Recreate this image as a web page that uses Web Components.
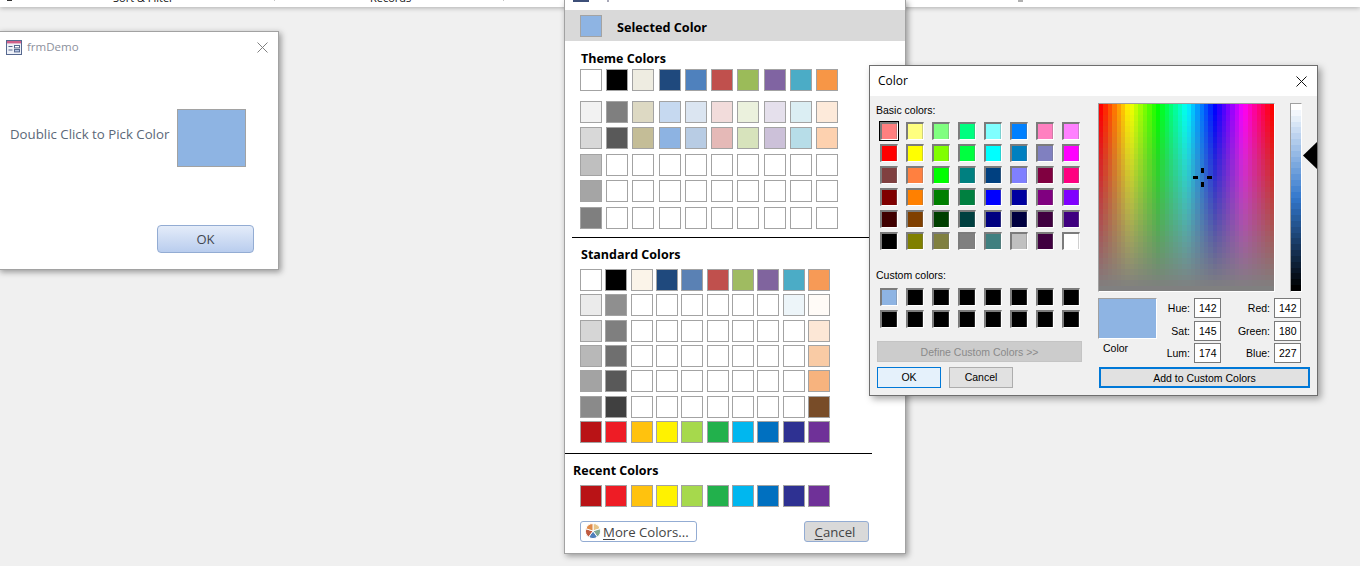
<!DOCTYPE html>
<html lang="en"><head><meta charset="utf-8"><title>Color picker</title>
<style>
html,body{margin:0;padding:0;background:#f0f0f0;overflow:hidden}
body{width:1360px;height:566px;position:relative;font-family:"Open Sans",sans-serif}
form-window{left:-2px;top:31px}
palette-panel{left:564px;top:0}
color-dialog{left:869px;top:65px}
</style></head><body>
<ribbon-strip></ribbon-strip>
<form-window></form-window>
<palette-panel></palette-panel>
<color-dialog></color-dialog>
<script>
const def=(name,css,html,init)=>customElements.define(name,class extends HTMLElement{
  connectedCallback(){ if(this.shadowRoot) return;
    const r=this.attachShadow({mode:'open'});
    r.innerHTML='<style>'+css+'</style>'+(typeof html==='function'?html(this):html);
    if(init) init(r,this);
  }
});
const W='#ffffff';
const whites=n=>Array(n).fill(W);

/* flat office-style swatch grid */
def('swatch-grid',`
:host{display:grid;grid-template-columns:repeat(10,22px);column-gap:var(--cg,4.22px);row-gap:var(--rg,4.4px);width:max-content}
i{display:block;width:22px;height:22px;box-sizing:border-box;border:1px solid #a3a3a3}
`,h=>h.getAttribute('colors').split(',').map(c=>`<i style="background:${c}"></i>`).join(''));

/* sunken win32 swatch grid */
def('well-grid',`
:host{display:grid;grid-template-columns:repeat(8,18px);column-gap:8px;row-gap:4px;width:max-content}
i{display:block;width:18px;height:18px;box-sizing:border-box;border-style:solid;border-width:2px 1px 1px 2px;border-color:#7c7c7c #fff #fff #7c7c7c;box-shadow:inset -1px 0 0 rgba(120,120,120,.35)}
i.sel{outline:1px solid #000;outline-offset:0}
`,h=>h.getAttribute('colors').split(',').map((c,i)=>`<i class="${i==0&&h.hasAttribute('selected')?'sel':''}" style="background:${c}"></i>`).join(''));

def('ribbon-strip',`
:host{display:block;height:7px;background:#fff;box-shadow:0 1px 5px rgba(0,0,0,.28);overflow:hidden;position:relative;font:11px/14px "Open Sans",sans-serif;color:#111}
.row{display:flex;align-items:flex-start}
b{display:block;height:1px}
span{display:block;margin-top:-9px;white-space:nowrap}
`,`<div class="row">
<b style="margin-left:7px;width:5px;background:#333"></b>
<span style="margin-left:101px;width:61px">Sort &amp; Filter</span>
<b style="margin-left:100px;width:1px;background:#c6c6c6"></b>
<span style="margin-left:95px;width:40px">Records</span>
<b style="margin-left:93px;width:1px;background:#c6c6c6"></b>
<b style="margin-left:514px;width:5px;height:2px;background:#b0b0b0"></b>
</div>`);

def('form-window',`
:host{display:block;position:absolute;width:281px;height:239px;box-sizing:border-box;background:#fff;border:1px solid #a2a2a2;box-shadow:2px 2px 6px rgba(0,0,0,.38)}
.title{display:flex;align-items:center;height:30px;padding:0 10px 0 7px;font:11.5px/16px "Open Sans",sans-serif;color:#8c909c}
.title span{margin-left:5px;flex:1}
.body{display:grid;grid-template-columns:167px 69px;padding:47px 0 0 11px;align-items:start}
.label{font:13.25px/18px "Open Sans",sans-serif;color:#5b6878;margin-top:16px;white-space:nowrap}
.sw{height:58px;box-sizing:border-box;background:#8eb4e3;border:1px solid #a2a2a2}
.foot{display:flex;justify-content:flex-end;padding:58px 24px 0 0}
.ok{width:97px;height:28px;box-sizing:border-box;border:1px solid #93acd3;border-radius:4px;background:linear-gradient(#e4ecf9,#b9cdee);font:13px/26px "Open Sans",sans-serif;color:#3f4650;text-align:center}
svg{display:block}
`,`<div class="title">
<svg width="16" height="15" viewBox="0 0 16 15"><rect x=".5" y=".5" width="15" height="14" fill="#eef1f8" stroke="#56688f"/><rect x="1" y="1" width="14" height="2.4" fill="#cf5f8a"/><path d="M2.5 6.5h4M2.5 10h4" stroke="#56688f"/><rect x="8.5" y="5.5" width="5" height="2.4" fill="#fff" stroke="#56688f"/><rect x="8.5" y="9.500" width="5" height="2.4" fill="#b4c4e2" stroke="#56688f"/></svg>
<span>frmDemo</span>
<svg width="11" height="11" viewBox="0 0 11 11"><path d="M.5.5l10 10M10.5.5l-10 10" stroke="#808080" fill="none"/></svg>
</div>
<div class="body"><div class="label">Doublic Click to Pick Color</div><div class="sw"></div></div>
<div class="foot"><div class="ok">OK</div></div>`);

const theme1=[W,'#000000','#eeece1','#1f497d','#4f81bd','#c0504d','#9bbb59','#8064a2','#4bacc6','#f79646'];
const theme2=['#f2f2f2','#7f7f7f','#ddd9c3','#c6d9f0','#dbe5f1','#f2dcdb','#ebf1dd','#e5e0ec','#dbeef3','#fdeada',
'#d8d8d8','#595959','#c4bd97','#8db3e2','#b8cce4','#e5b9b7','#d7e3bc','#ccc1d9','#b7dde8','#fdd1af',
'#bfbfbf',...whites(9),'#a5a5a5',...whites(9),'#7f7f7f',...whites(9)];
const brights=['#b91316','#ee1c25','#ffc20e','#fff200','#a6d94c','#22b14c','#00b7ef','#0070c0','#2e3192','#6f3198'];
const std=[W,'#000000','#fbf4e9','#1f497d','#5a81b4','#c0504d','#9fbb61','#80649e','#4bacc6','#f79a56',
'#ebebeb','#8f8f8f',...whites(6),'#edf5f9','#fffbf7',
'#d6d6d6','#7f7f7f',...whites(7),'#fce7d6',
'#b8b8b8','#6f6f6f',...whites(7),'#f9cba5',
'#a3a3a3','#595959',...whites(7),'#f7b37e',
'#8a8a8a','#404040',...whites(7),'#784c28',...brights];

def('palette-panel',`
:host{display:block;position:absolute;width:342px;height:554px;box-sizing:border-box;background:#fff;border:1px solid #a2a2a2;border-top:0;box-shadow:2px 2px 6px rgba(0,0,0,.38);font:700 12.5px/18px "Open Sans",sans-serif;color:#000}
.hint{height:10px;display:flex;align-items:flex-start}
.hint b{display:block;margin-left:8px;width:16px;height:2px;background:#3d4f78}
.hint s{display:block;margin-left:18px;width:2px;height:2px;background:#a8a8b8}
.sel{height:31px;background:#d9d9d9;display:flex;align-items:center}
.sel i{display:block;width:22px;height:22px;box-sizing:border-box;margin:1px 15px 0 15px;background:#8eb4e3;border:1px solid #a3a3a3}
.sel span{font-size:12.7px;margin-top:2px}
.lab{padding-left:16px}
.pad{padding-left:15px}
hr{border:0;background:#000;height:1px;margin:0}
.foot{display:flex;justify-content:space-between;padding:14px 36px 0 15px}
.btn{height:21px;box-sizing:border-box;border:1px solid #93acd3;border-radius:3px;font:400 13.2px/19px "Open Sans",sans-serif;color:#444;display:flex;align-items:center}
.btn span{margin-top:3px}
.more{width:117px;padding-left:4px;background:#fff}
.more svg{display:block;margin-right:2px}
.cancel{width:65px;justify-content:center;background:#d9d9d9;padding-right:3px}
u{text-underline-offset:2px}
`,`<div class="hint"><b></b><s></s></div>
<div class="sel"><i></i><span>Selected Color</span></div>
<div class="lab" style="margin:9px 0 1px">Theme Colors</div>
<div class="pad"><swatch-grid colors="${theme1}"></swatch-grid></div>
<div class="pad" style="margin-top:10px"><swatch-grid colors="${theme2}"></swatch-grid></div>
<hr style="margin:8.4px 0 0 7px;width:300px">
<div class="lab" style="margin:8px 0 5px">Standard Colors</div>
<div class="pad" style="--cg:3.33px;--rg:3.33px"><swatch-grid colors="${std}"></swatch-grid></div>
<hr style="margin-top:10px;width:307px">
<div class="lab" style="margin:8px 0 5px;padding-left:8px">Recent Colors</div>
<div class="pad" style="--cg:3.33px"><swatch-grid colors="${brights}"></swatch-grid></div>
<div class="foot">
<div class="btn more"><svg width="16" height="16" viewBox="0 0 30 30" stroke="#fff" stroke-width="1.8">
<path d="M15 15L15 1A14 14 0 0 1 28.300 10.700Z" fill="#e7c488"/><path d="M15 15L28.300 10.700A14 14 0 0 1 23.200 26.300Z" fill="#7fa890"/><path d="M15 15L23.200 26.300A14 14 0 0 1 6.800 26.300Z" fill="#4f7fbb"/><path d="M15 15L6.800 26.300A14 14 0 0 1 1.700 10.700Z" fill="#bf5a3f"/><path d="M15 15L1.700 10.700A14 14 0 0 1 15 1Z" fill="#e08a48"/></svg><span><u>M</u>ore Colors...</span></div>
<div class="btn cancel"><span><u>C</u>ancel</span></div>
</div>`);

const basic='#ff8080,#ffff80,#80ff80,#00ff80,#80ffff,#0080ff,#ff80c0,#ff80ff,#ff0000,#ffff00,#80ff00,#00ff40,#00ffff,#0080c0,#8080c0,#ff00ff,#804040,#ff8040,#00ff00,#008080,#004080,#8080ff,#800040,#ff0080,#800000,#ff8000,#008000,#008040,#0000ff,#0000a0,#800080,#8000ff,#400000,#804000,#004000,#004040,#000080,#000040,#400040,#400080,#000000,#808000,#808040,#808080,#408080,#c0c0c0,#400040,#ffffff';
const custom=['#8eb4e3',...Array(15).fill('#000000')];
const fields=[['Hue:','142','Red:','142'],['Sat:','145','Green:','180'],['Lum:','174','Blue:','227']];

def('color-dialog',`
:host{display:block;position:absolute;width:449px;height:331px;box-sizing:border-box;background:#f0f0f0;border:1px solid #6e6e6e;box-shadow:3px 3px 7px rgba(0,0,0,.35);font:10.5px/14px "Liberation Sans",sans-serif;color:#000}
.title{height:30px;background:#fff;display:flex;align-items:center;justify-content:space-between;padding:0 10px 0 8px;font:12px/16px "Open Sans",sans-serif}
svg{display:block}
.cols{display:flex;padding-left:6px}
.left{width:222px}
.btn{height:21px;box-sizing:border-box;text-align:center;line-height:19px;border:1px solid #adadad;background:#e1e1e1}
.spec{display:flex;align-items:flex-start;margin-top:7px}
.map{position:relative;width:177px;height:189px;box-sizing:border-box;border:1px solid;border-color:#a0a0a0 #fff #fff #a0a0a0}
canvas{display:block}
.map b{position:absolute;background:#000}
.lum{width:12px;height:189px;box-sizing:border-box;border:1px solid;border-color:#a0a0a0 #fff #fff #a0a0a0;margin-left:15px}
.ptr{margin:39px 0 0 1px}
.low{display:flex;margin-top:6px}
.pv{width:59px;height:41px;box-sizing:border-box;background:#8eb4e3;border:1px solid;border-color:#a0a0a0 #fff #fff #a0a0a0}
.pvl{margin:2px 0 0 5px}
.grid{display:grid;grid-template-columns:37px 27px 53px 27px;grid-auto-rows:20px;row-gap:2.5px;align-items:center}
.grid span{text-align:right;padding-right:4px}
.grid em{font-style:normal;display:block;height:20px;box-sizing:border-box;border:1px solid #7a7a7a;background:#fff;padding-left:4px;line-height:18px;font-size:10.5px}
.add{margin:4px 0 0 1px;width:211px;border:2px solid #0078d7;line-height:18px}
`,`<div class="title"><span>Color</span><svg width="11" height="11" viewBox="0 0 11 11"><path d="M.5.5l10 10M10.500.5l-10 10" stroke="#111" fill="none"/></svg></div>
<div class="cols">
<div class="left">
<div style="margin-top:7px">Basic colors:</div>
<well-grid selected colors="${basic}" style="margin:5px 0 0 4px"></well-grid>
<div style="margin-top:18px">Custom colors:</div>
<well-grid colors="${custom}" style="margin:6px 0 0 4px"></well-grid>
<div class="btn" style="margin:13px 0 0 1px;width:205px;line-height:20px;background:#cccccc;border-color:#c4c4c4;color:#8a8a8a">Define Custom Colors &gt;&gt;</div>
<div style="display:flex;gap:8px;margin:5px 0 0 1px">
<div class="btn" style="width:64px;border-color:#0078d7;background:#e5f1fb">OK</div>
<div class="btn" style="width:64px">Cancel</div>
</div>
</div>
<div>
<div class="spec">
<div class="map"><canvas id="c" width="175" height="187"></canvas>
<b style="left:102px;top:64px;width:3px;height:5px"></b><b style="left:102px;top:78px;width:3px;height:5px"></b><b style="left:94px;top:72px;width:5px;height:3px"></b><b style="left:108px;top:72px;width:5px;height:3px"></b></div>
<div class="lum"><canvas id="l" width="10" height="187"></canvas></div>
<svg class="ptr" width="14" height="27" viewBox="0 0 14 27"><path d="M0 13.500L14 0V27Z" fill="#000"/></svg>
</div>
<div class="low">
<div><div class="pv"></div><div class="pvl">Color</div></div>
<div class="grid">${fields.map(f=>`<span>${f[0]}</span><em>${f[1]}</em><span>${f[2]}</span><em>${f[3]}</em>`).join('')}</div>
</div>
<div class="btn add">Add to Custom Colors</div>
</div>
</div>`,r=>{
  const c=r.getElementById('c').getContext('2d');
  const cols=40,rows=34,w=175,h=187;
  for(let i=0;i<cols;i++)for(let j=0;j<rows;j++){
    c.fillStyle=`hsl(${i/(cols-1)*360},${(1-j/(rows-1))*100}%,50%)`;
    const x=Math.round(i*w/cols),y=Math.round(j*h/rows);
    c.fillRect(x,y,Math.round((i+1)*w/cols)-x,Math.round((j+1)*h/rows)-y);
  }
  const l=r.getElementById('l').getContext('2d');
  const n=32;
  for(let j=0;j<n;j++){
    l.fillStyle=`hsl(213,60.4%,${(1-j/(n-1))*100}%)`;
    const y=Math.round(j*h/n);
    l.fillRect(0,y,10,Math.round((j+1)*h/n)-y);
  }
});
</script>
</body></html>
